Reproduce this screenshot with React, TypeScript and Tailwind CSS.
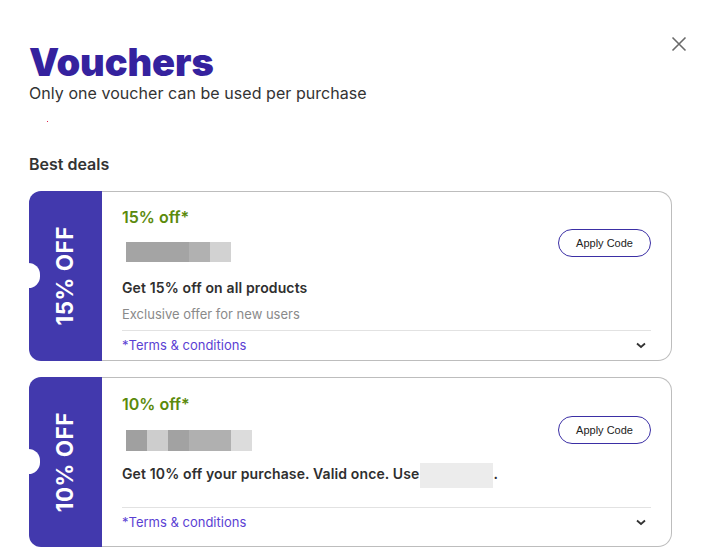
import React from "react";

type Voucher = {
  tab: string;
  title: string;
  codeBlocks: { w: number; color: string }[];
  codeH: string;
  desc: React.ReactNode;
  sub?: string;
  pad: { pt: string; codeMt: string; descMt: string; divMt: string; pb: string };
};

const vouchers: Voucher[] = [
  {
    tab: "15% OFF",
    title: "15% off*",
    codeBlocks: [
      { w: 63, color: "bg-[#a4a4a4]" },
      { w: 21, color: "bg-[#b1b1b1]" },
      { w: 21, color: "bg-[#d2d2d2]" },
    ],
    codeH: "h-[20px]",
    desc: "Get 15% off on all products",
    sub: "Exclusive offer for new users",
    pad: { pt: "pt-[15px]", codeMt: "mt-[15px]", descMt: "mt-[16px]", divMt: "mt-[7px]", pb: "pb-[6px]" },
  },
  {
    tab: "10% OFF",
    title: "10% off*",
    codeBlocks: [
      { w: 21, color: "bg-[#a0a0a0]" },
      { w: 21, color: "bg-[#cdcdcd]" },
      { w: 21, color: "bg-[#a2a2a2]" },
      { w: 42, color: "bg-[#b0b0b0]" },
      { w: 21, color: "bg-[#dcdcdc]" },
    ],
    codeH: "h-[21px]",
    desc: (
      <>
        Get 10% off your purchase. Valid once. Use
        <span className="inline-block w-[73px] h-[25px] -my-[3px] bg-[#ececec] align-middle ml-[1px]" />.
      </>
    ),
    pad: { pt: "pt-[16px]", codeMt: "mt-[16px]", descMt: "mt-[13px]", divMt: "mt-[22px]", pb: "pb-[14px]" },
  },
];

const VoucherCard: React.FC<{ v: Voucher }> = ({ v }) => {
  return (
    <div className="flex h-[170px]">
      <div className="relative w-[73px] shrink-0 bg-[#4239ad] rounded-l-[12px] flex items-center justify-center">
        <span className="absolute left-[-12px] top-[72px] w-[23px] h-[25px] rounded-full bg-white" />
        <span className="[writing-mode:vertical-rl] rotate-180 text-white font-bold text-[22.5px] tracking-[0.5px] leading-none">
          {v.tab}
        </span>
      </div>
      <div className={`flex-1 flex flex-col border border-l-0 border-[#bdbdbd] rounded-r-[14px] px-5 ${v.pad.pt} ${v.pad.pb}`}>
        <div className="flex justify-between items-start shrink-0">
          <div>
            <div className="text-[16px] leading-[20px] font-semibold text-[#5b8a0c]">{v.title}</div>
            <div className={`flex ml-1 ${v.pad.codeMt} ${v.codeH}`}>
              {v.codeBlocks.map((b, i) => (
                <span key={i} className={b.color} style={{ width: b.w }} />
              ))}
            </div>
          </div>
          <button className="mt-[22px] w-[93px] h-[28px] rounded-full border border-[#3b2fa5] text-[11px] text-[#222] font-['Liberation_Sans',Arial,sans-serif]">
            Apply Code
          </button>
        </div>
        <div className={`${v.pad.descMt} shrink-0 text-[14px] leading-[20px] font-semibold text-[#2f2f2f] tracking-[0.13px]`}>{v.desc}</div>
        {v.sub && <div className="mt-[7px] shrink-0 text-[13px] leading-[18px] text-[#8a8a8a]">{v.sub}</div>}
        <div className={`${v.pad.divMt} shrink-0 h-px bg-[#e2e2e2]`} />
        <div className="mt-[5px] shrink-0 flex justify-between items-center">
          <span className="text-[13px] leading-[18px] text-[#5b3fd3]">*Terms &amp; conditions</span>
          <svg width="12" height="12" viewBox="0 0 12 12" className="mr-[4px]">
            <path d="M2 4.5 L6 8 L10 4.5" fill="none" stroke="#333" strokeWidth="1.8" />
          </svg>
        </div>
      </div>
    </div>
  );
};

const App: React.FC = () => {
  return (
    <div className="relative w-[701px] h-[556px] bg-white overflow-hidden font-['Inter','Noto_Sans',sans-serif]">
      <button className="absolute left-[671px] top-[36px] w-4 h-4">
        <svg width="16" height="16" viewBox="0 0 16 16">
          <path d="M1.5 1.5 L14.5 14.5 M14.5 1.5 L1.5 14.5" stroke="#6a6a6a" strokeWidth="1.6" />
        </svg>
      </button>
      <div className="pl-[29px] pr-[29px] pt-[42px]">
        <h1 className="text-[38px] leading-[40px] font-black text-[#35229e] tracking-[-0.1px]">Vouchers</h1>
        <p className="mt-[1px] text-[16px] leading-[20px] text-[#333] tracking-[0.05px]">Only one voucher can be used per purchase</p>
        <div className="h-[51px] relative">
          <span className="absolute left-[18px] top-[18px] w-px h-px bg-[#e0204a]" />
        </div>
        <h2 className="text-[16px] leading-[20px] font-semibold text-[#333]">Best deals</h2>
        <div className="mt-[17px] flex flex-col gap-4">
          {vouchers.map((v) => (
            <VoucherCard key={v.tab} v={v} />
          ))}
        </div>
      </div>
    </div>
  );
};

export default App;
